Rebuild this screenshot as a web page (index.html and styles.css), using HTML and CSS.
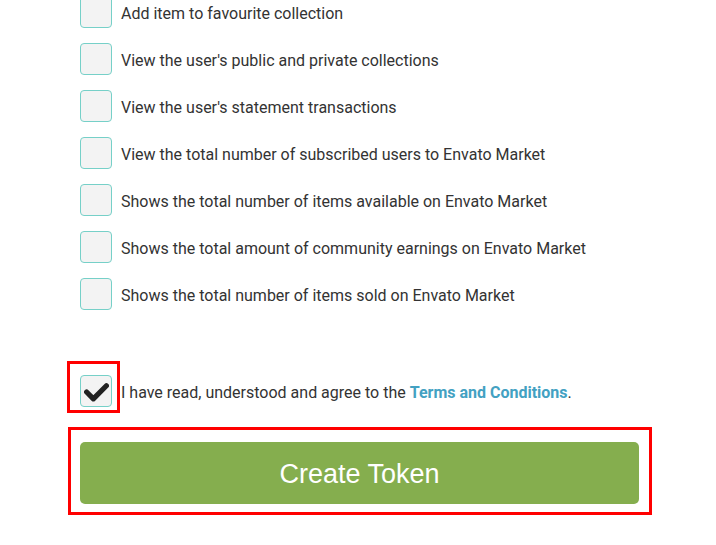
FILE: index.html
```html
<!DOCTYPE html>
<html>
<head>
<meta charset="utf-8">
<link rel="stylesheet" href="styles.css">
</head>
<body>
<div class="page">
  <ul class="perms">
    <li class="perm"><span class="box"></span><span class="label">Add item to favourite collection</span></li>
    <li class="perm"><span class="box"></span><span class="label">View the user's public and private collections</span></li>
    <li class="perm"><span class="box"></span><span class="label">View the user's statement transactions</span></li>
    <li class="perm"><span class="box"></span><span class="label">View the total number of subscribed users to Envato Market</span></li>
    <li class="perm"><span class="box"></span><span class="label">Shows the total number of items available on Envato Market</span></li>
    <li class="perm"><span class="box"></span><span class="label">Shows the total amount of community earnings on Envato Market</span></li>
    <li class="perm"><span class="box"></span><span class="label">Shows the total number of items sold on Envato Market</span></li>
  </ul>
  <div class="agree">
    <span class="box checked">
      <svg class="tick" viewBox="0 0 24 24" width="25" height="25"><path d="M2.5 12.5 L9 19 L21.5 6.5" fill="none" stroke="#222" stroke-width="5" stroke-linecap="round" stroke-linejoin="round"/></svg>
      <span class="mark mark-box"></span>
    </span>
    <span class="label">I have read, understood and agree to the <a class="terms" href="#">Terms and Conditions</a>.</span>
  </div>
  <div class="btn-wrap">
    <button class="create">Create Token</button>
    <span class="mark mark-btn"></span>
  </div>
</div>
</body>
</html>
```
FILE: styles.css
```css
html, body {
  margin: 0;
  padding: 0;
  background: #fff;
}
.page {
  padding: 0 0 40px 80px;
  width: 559px;
  font-family: Roboto, "Liberation Sans", sans-serif;
  font-size: 16px;
  color: #333;
}
.perms {
  list-style: none;
  margin: -4px 0 0 0;
  padding: 0;
  display: flex;
  flex-direction: column;
  gap: 15px;
}
.perm, .agree {
  display: flex;
  align-items: center;
}
.box {
  position: relative;
  flex: none;
  width: 30px;
  height: 30px;
  border: 1px solid #76d0c8;
  border-radius: 4px;
  background: #f3f3f3;
  margin-right: 9px;
  display: flex;
  align-items: center;
  justify-content: center;
}
.label {
  line-height: 20px;
  padding-top: 4px;
}
.agree {
  margin-top: 65px;
}
.terms {
  color: #43a1c2;
  font-weight: bold;
  text-decoration: none;
}
.btn-wrap {
  position: relative;
  margin-top: 35px;
}
.create {
  display: block;
  width: 559px;
  height: 62px;
  border: none;
  border-radius: 5px;
  background: #85ae4e;
  color: #fff;
  font-family: "Liberation Sans", Arial, sans-serif;
  font-size: 27px;
  padding: 0;
  padding-top: 2px;
}
.mark {
  position: absolute;
  border: 3px solid #f00;
  pointer-events: none;
}
.mark-box {
  left: -14px;
  top: -15px;
  width: 47px;
  height: 46px;
}
.mark-btn {
  left: -12px;
  top: -15px;
  width: 578px;
  height: 82px;
}
```
